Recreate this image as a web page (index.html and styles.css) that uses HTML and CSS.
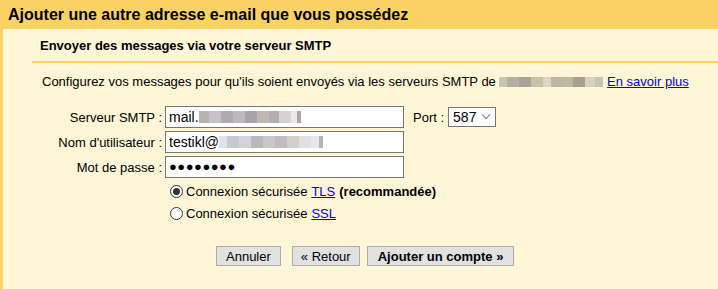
FILE: index.html
```html
<!DOCTYPE html>
<html>
<head>
    <meta charset="UTF-8">
    <title>Ajouter une autre adresse e-mail</title>
    <link rel="stylesheet" href="styles.css">
</head>
<body>

<div class="header">Ajouter une autre adresse e-mail que vous possédez</div>

<div class="panel">
    <div class="subhead">Envoyer des messages via votre serveur SMTP</div>
    <div class="rule"></div>

    <p class="intro">
        Configurez vos messages pour qu'ils soient envoyés via les serveurs SMTP de
        <span class="blur blur-domain"></span>
        <a href="#">En savoir plus</a>
    </p>

    <div class="form">
        <div class="row">
            <label class="lbl">Serveur SMTP :</label>
            <div class="field">mail.<span class="blur blur-host"></span></div>
            <label class="port-lbl">Port :</label>
            <div class="select">587 <span class="chev"></span></div>
        </div>
        <div class="row">
            <label class="lbl">Nom d'utilisateur :</label>
            <div class="field">testikl@<span class="blur blur-user"></span></div>
        </div>
        <div class="row">
            <label class="lbl">Mot de passe :</label>
            <div class="field dots">&#9679;&#9679;&#9679;&#9679;&#9679;&#9679;&#9679;&#9679;</div>
        </div>

        <div class="radios">
            <div class="radio-row"><span class="radio on"></span>Connexion sécurisée <a href="#">TLS</a> <b>(recommandée)</b></div>
            <div class="radio-row"><span class="radio"></span>Connexion sécurisée <a href="#">SSL</a></div>
        </div>
    </div>

    <div class="buttons">
        <button class="btn">Annuler</button>
        <button class="btn btn-back">« Retour</button>
        <button class="btn btn-main">Ajouter un compte »</button>
    </div>
</div>

</body>
</html>
```

FILE: styles.css
```css
body {
    margin: 0;
    font-family: "Liberation Sans", Arial, sans-serif;
    font-size: 13px;
    color: #000;
    background: #fff5d7;
    height: 289px;
    overflow: hidden;
}
.header {
    background: #fad163;
    height: 29px;
    line-height: 30px;
    padding-left: 8px;
    font-size: 16px;
    font-weight: bold;
}
.panel {
    border-left: 3px solid #fad163;
    height: 260px;
}
.subhead {
    padding: 9px 0 0 37px;
    height: 23px;
    font-weight: bold;
    line-height: 15px;
}
.rule {
    margin-left: 29px;
    height: 2px;
    background: #fad163;
}
.intro {
    margin: 11px 0 0 39px;
    line-height: 16px;
}
a {
    color: #0000ee;
    text-decoration: underline;
}
.blur {
    display: inline-block;
    height: 10px;
    vertical-align: -1px;
}
.blur-domain {
    width: 104px;
    background: linear-gradient(90deg, #c8c3b6 0 8px, #b5aea2 8px 20px, #a9a39a 20px 32px, #c9c0a8 32px 44px, #ddd5bf 44px 52px, #bdb6a6 52px 64px, #c1b8a2 64px 74px, #a79f90 74px 86px, #d8d0ba 86px 96px, #c9c4b8 96px 104px);
}
.blur-host {
    width: 106px;
    height: 12px;
    background: linear-gradient(90deg, #b8b2b2 0 10px, #c5c3c6 10px 22px, #aeaab0 22px 34px, #bdb9bc 34px 46px, #a6a3ab 46px 58px, #c0b8b3 58px 70px, #b3aeb0 70px 80px, #d6d2d0 80px 92px, #ebe8e6 92px 98px, #a8a5ad 98px 102px, #fff 102px);
}
.blur-user {
    width: 108px;
    height: 12px;
    background: linear-gradient(90deg, #dfe2e7 0 8px, #c6cad3 8px 20px, #d4d4d8 20px 32px, #b8b8c0 32px 44px, #cbc7c7 44px 56px, #c1bcbd 56px 68px, #d2cfcf 68px 80px, #e2e0df 80px 92px, #e9e8e8 92px 100px, #b5b4bd 100px 104px, #fff 104px);
}
.form {
    margin-top: 16px;
}
.row {
    display: flex;
    align-items: center;
    margin-bottom: 3px;
}
.lbl {
    width: 159px;
    text-align: right;
    padding-right: 3px;
}
.field {
    box-sizing: border-box;
    width: 239px;
    height: 22px;
    border: 1px solid #767676;
    background: #fff;
    padding: 0 3px;
    font-size: 14px;
    line-height: 20px;
    display: flex;
    align-items: center;
}
.dots {
    font-size: 13px;
    letter-spacing: 0.5px;
}
.port-lbl {
    margin-left: 9px;
    margin-right: 4px;
}
.select {
    box-sizing: border-box;
    width: 48px;
    height: 20px;
    border: 1px solid #767676;
    background: #fff;
    padding-left: 4px;
    font-size: 14px;
    line-height: 18px;
    position: relative;
}
.chev {
    position: absolute;
    right: 6px;
    top: 4px;
    width: 5px;
    height: 5px;
    border-right: 1px solid #777;
    border-bottom: 1px solid #777;
    transform: rotate(45deg);
}
.radios {
    margin: -1px 0 0 167px;
}
.radio-row {
    display: flex;
    align-items: center;
    height: 22px;
}
.radio-row a {
    margin: 0 4px;
}
.radio {
    box-sizing: border-box;
    width: 13px;
    height: 13px;
    border: 1px solid #333;
    border-radius: 50%;
    background: #fff;
    margin-right: 3px;
    position: relative;
}
.radio.on::after {
    content: "";
    position: absolute;
    left: 2px;
    top: 2px;
    width: 7px;
    height: 7px;
    border-radius: 50%;
    background: #333;
}
.buttons {
    display: flex;
    margin: 22px 0 0 213px;
}
.btn {
    font-family: "Liberation Sans", Arial, sans-serif;
    font-size: 13px;
    height: 20px;
    padding: 0 9px;
    background: #e1e1e1;
    border: 1px solid #adadad;
    color: #000;
    margin-right: 7px;
}
.btn-back {
    margin-left: 4px;
    padding: 0 8px;
}
.btn-main {
    font-weight: bold;
    padding: 0 10px;
}
```
